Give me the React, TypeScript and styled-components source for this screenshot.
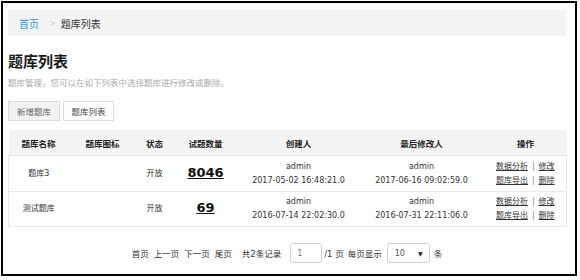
import React from 'react';
import styled, { createGlobalStyle } from 'styled-components';

const GlobalStyle = createGlobalStyle`
  body {
    margin: 0;
    background: #fff;
    font-family: "DejaVu Sans", "Noto Sans CJK SC", sans-serif;
    color: #333;
  }
`;

type Bank = {
  name: string;
  status: string;
  count: number;
  creator: string;
  created: string;
  modifier: string;
  modified: string;
};

const banks: Bank[] = [
  {
    name: '题库3',
    status: '开放',
    count: 8046,
    creator: 'admin',
    created: '2017-05-02 16:48:21.0',
    modifier: 'admin',
    modified: '2017-06-16 09:02:59.0',
  },
  {
    name: '测试题库',
    status: '开放',
    count: 69,
    creator: 'admin',
    created: '2016-07-14 22:02:30.0',
    modifier: 'admin',
    modified: '2016-07-31 22:11:06.0',
  },
];

const columns = [
  { title: '题库名称', width: 60 },
  { title: '题库图标', width: 68 },
  { title: '状态', width: 36 },
  { title: '试题数量', width: 66 },
  { title: '创建人', width: 120 },
  { title: '最后修改人', width: 126 },
  { title: '操作', width: 82 },
];

const App: React.FC = () => {
  return (
    <>
      <GlobalStyle />
      <Frame>
        <Breadcrumb>
          <CrumbLink href="#">首页</CrumbLink>
          <CrumbSep>&gt;</CrumbSep>
          <CrumbCurrent>题库列表</CrumbCurrent>
        </Breadcrumb>

        <PageTitle>题库列表</PageTitle>
        <Description>题库管理，您可以在如下列表中选择题库进行修改或删除。</Description>

        <ButtonRow>
          <TabButton $active>新增题库</TabButton>
          <TabButton>题库列表</TabButton>
        </ButtonRow>

        <Table>
          <colgroup>
            {columns.map((c) => (
              <col key={c.title} style={{ width: c.width }} />
            ))}
          </colgroup>
          <thead>
            <tr>
              {columns.map((c) => (
                <HeadCell key={c.title}>{c.title}</HeadCell>
              ))}
            </tr>
          </thead>
          <tbody>
            {banks.map((b, i) => (
              <BodyRow key={b.name} $height={i === 0 ? 36 : 35}>
                <Cell>{b.name}</Cell>
                <Cell />
                <Cell>{b.status}</Cell>
                <Cell>
                  <CountLink href="#">{b.count}</CountLink>
                </Cell>
                <Cell>
                  <Line>{b.creator}</Line>
                  <Line>{b.created}</Line>
                </Cell>
                <Cell>
                  <Line>{b.modifier}</Line>
                  <Line>{b.modified}</Line>
                </Cell>
                <Cell>
                  <Line>
                    <ActionLink href="#">数据分析</ActionLink>
                    <Pipe>|</Pipe>
                    <ActionLink href="#">修改</ActionLink>
                  </Line>
                  <Line>
                    <ActionLink href="#">题库导出</ActionLink>
                    <Pipe>|</Pipe>
                    <ActionLink href="#">删除</ActionLink>
                  </Line>
                </Cell>
              </BodyRow>
            ))}
          </tbody>
        </Table>

        <Pager>
          <PagerLink>首页</PagerLink>
          <PagerLink>上一页</PagerLink>
          <PagerLink>下一页</PagerLink>
          <PagerLink>尾页</PagerLink>
          <PagerText $gap={10}>共2条记录</PagerText>
          <PageInput defaultValue="1" />
          <PagerText $gap={2}>/1 页</PagerText>
          <PagerText $gap={4}>每页显示</PagerText>
          <SelectBox>
            <span>10</span>
            <Caret>▼</Caret>
          </SelectBox>
          <PagerText $gap={4}>条</PagerText>
        </Pager>
      </Frame>
    </>
  );
};

const Frame = styled.div`
  box-sizing: border-box;
  margin: 1px;
  width: 576px;
  height: 275px;
  border: 2px solid #000;
  padding: 7px 9px 0 5px;
  display: flex;
  flex-direction: column;
`;

const Breadcrumb = styled.div`
  height: 26px;
  background: #f4f4f4;
  display: flex;
  align-items: center;
  padding-left: 11px;
  font-size: 10px;
`;

const CrumbLink = styled.a`
  color: #3b9bd8;
  text-decoration: none;
`;

const CrumbSep = styled.span`
  color: #c8c8c8;
  font-size: 8px;
  margin: 0 5px 0 10px;
`;

const CrumbCurrent = styled.span`
  color: #333;
`;

const PageTitle = styled.h1`
  margin: 16px 0 0;
  font-size: 15px;
  line-height: 20px;
  font-weight: bold;
  color: #1a1a1a;
`;

const Description = styled.p`
  margin: 5px 0 0;
  font-size: 8.5px;
  line-height: 12px;
  color: #aaa;
`;

const ButtonRow = styled.div`
  display: flex;
  gap: 3px;
  margin-top: 12px;
`;

const TabButton = styled.button<{ $active?: boolean }>`
  box-sizing: border-box;
  height: 20px;
  width: ${({ $active }) => ($active ? 52 : 51)}px;
  padding: 0;
  border: 1px solid #dcdcdc;
  background: ${({ $active }) => ($active ? '#f2f2f2' : '#fff')};
  color: ${({ $active }) => ($active ? '#666' : '#444')};
  font-family: inherit;
  font-size: 8.5px;
  cursor: pointer;
`;

const Table = styled.table`
  margin-top: 9px;
  width: 558px;
  table-layout: fixed;
  border-collapse: collapse;
  font-size: 8px;
`;

const HeadCell = styled.th`
  height: 25px;
  padding: 0;
  background: #f4f4f4;
  font-size: 8.5px;
  font-weight: bold;
  color: #222;
  text-align: center;
  border-bottom: 1px solid #e4e4e4;
`;

const BodyRow = styled.tr<{ $height: number }>`
  height: ${({ $height }) => $height}px;
  border: 1px solid #e8e8e8;
`;

const Cell = styled.td`
  padding: 0;
  text-align: center;
  vertical-align: middle;
  color: #333;
  font-size: 8px;
  line-height: 14px;
`;

const Line = styled.div`
  white-space: nowrap;
`;

const CountLink = styled.a`
  font-size: 13px;
  font-weight: bold;
  color: #111;
  text-decoration: underline;
`;

const ActionLink = styled.a`
  color: #333;
  text-decoration: underline;
`;

const Pipe = styled.span`
  color: #888;
  margin: 0 4px;
`;

const Pager = styled.div`
  margin-top: 16px;
  display: flex;
  justify-content: center;
  align-items: center;
  font-size: 8.5px;
  color: #333;
  gap: 5px;
`;

const PagerLink = styled.span`
  cursor: pointer;
`;

const PagerText = styled.span<{ $gap: number }>`
  margin-left: ${({ $gap }) => $gap - 5}px;
`;

const PageInput = styled.input`
  box-sizing: border-box;
  width: 32px;
  height: 20px;
  margin-left: 4px;
  border: 1px solid #d0d0d0;
  border-radius: 3px;
  padding: 0 0 0 6px;
  font-family: inherit;
  font-size: 8px;
  color: #777;
`;

const SelectBox = styled.div`
  box-sizing: border-box;
  width: 43px;
  height: 20px;
  border: 1px solid #d0d0d0;
  border-radius: 3px;
  display: flex;
  align-items: center;
  justify-content: space-between;
  padding: 0 6px 0 7px;
  font-size: 8px;
  color: #555;
`;

const Caret = styled.span`
  font-size: 6px;
  color: #222;
`;

export default App;
